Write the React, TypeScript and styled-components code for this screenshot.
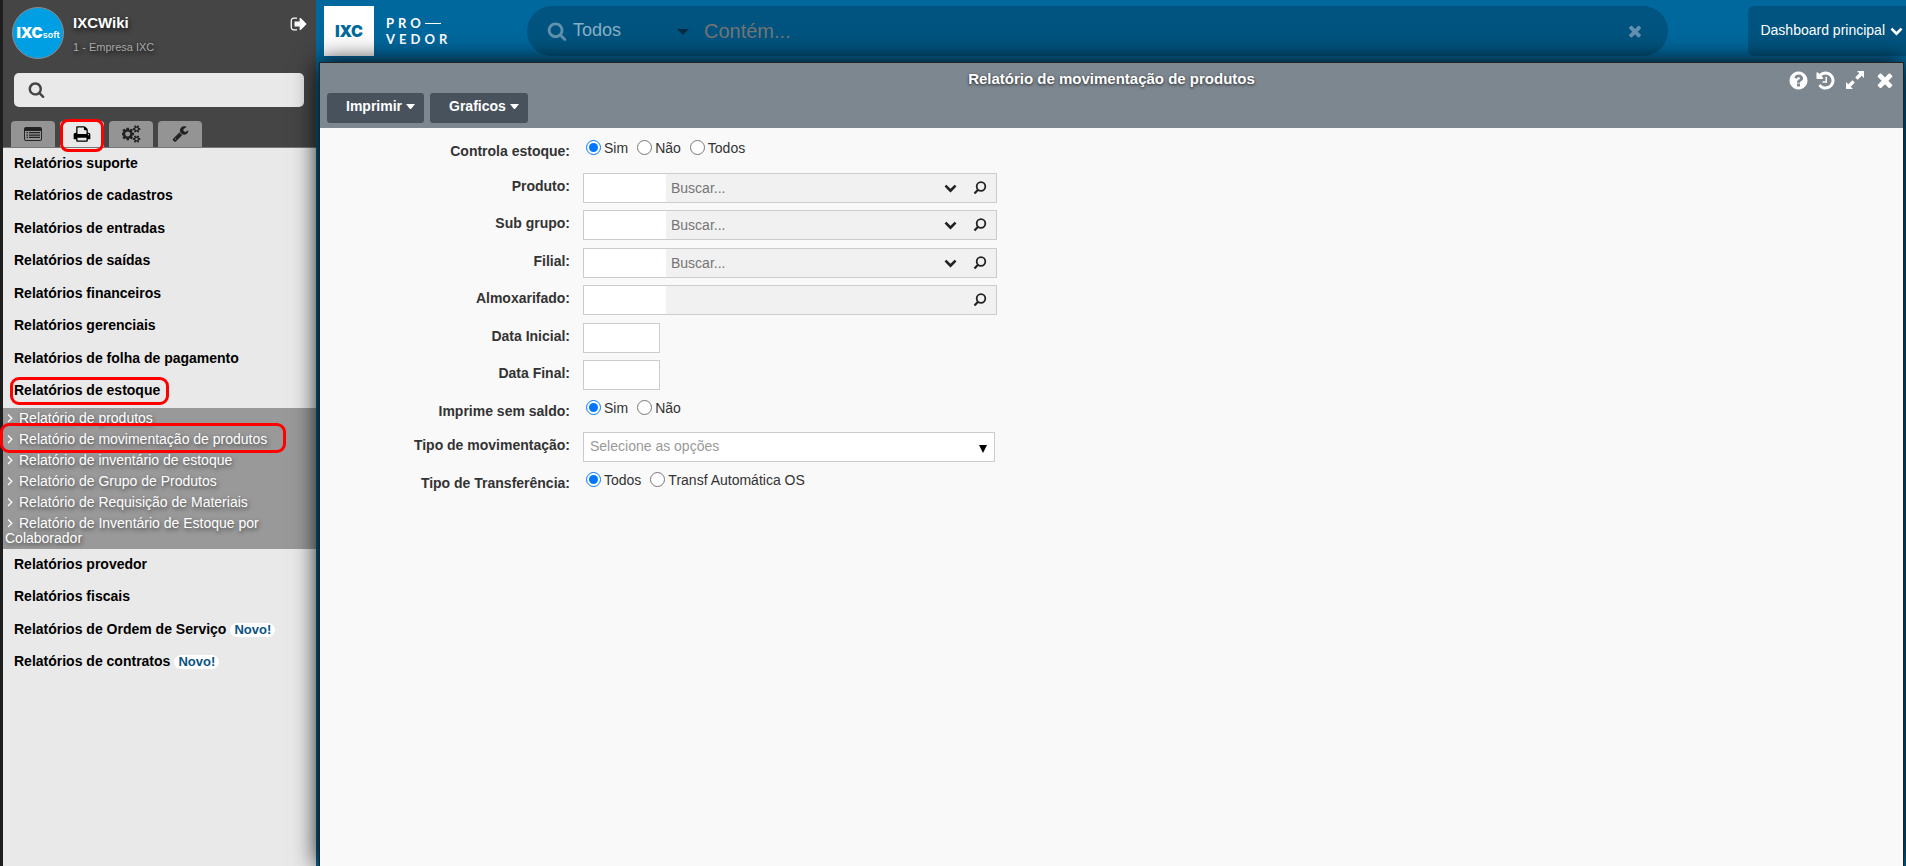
import React from "react";
import styled, { createGlobalStyle, css } from "styled-components";

const GlobalStyle = createGlobalStyle`
  *, *::before, *::after { box-sizing: border-box; }
  body {
    margin: 0;
    background: #00689d;
    color: #333;
    font-family: "Liberation Sans", Arial, Helvetica, sans-serif;
    font-size: 14px;
  }
  button, input, select { font-family: inherit; }
  ul { list-style: none; margin: 0; padding: 0; }
`;

/* ---------- icons ---------- */

type IconProps = { size: number; path: string; box?: string; wide?: number };

const Glyph = styled.svg`
  display: block;
  flex: none;
  fill: currentColor;
`;

const Icon = ({ size, path, box = "0 0 1792 1792", wide }: IconProps) => (
  <Glyph width={wide ?? size} height={size} viewBox={box} aria-hidden="true">
    <path d={path} />
  </Glyph>
);

const paths = {
  search:
    "M1216 832q0-185-131.5-316.5t-316.5-131.5-316.5 131.5-131.5 316.5 131.5 316.5 316.5 131.5 316.5-131.5 131.5-316.5zm512 832q0 52-38 90t-90 38q-54 0-90-38l-343-342q-179 124-399 124-143 0-273.5-55.5t-225-150-150-225-55.5-273.5 55.5-273.5 150-225 225-150 273.5-55.5 273.5 55.5 225 150 150 225 55.5 273.5q0 220-124 399l343 343q37 37 37 90z",
  times:
    "M1490 1322q0 40-28 68l-136 136q-28 28-68 28t-68-28l-294-294-294 294q-28 28-68 28t-68-28l-136-136q-28-28-28-68t28-68l294-294-294-294q-28-28-28-68t28-68l136-136q28-28 68-28t68 28l294 294 294-294q28-28 68-28t68 28l136 136q28 28 28 68t-28 68l-294 294 294 294q28 28 28 68z",
  wrench:
    "M448 1472q0-26-19-45t-45-19-45 19-19 45 19 45 45 19 45-19 19-45zm644-420l-682 682q-37 37-90 37-52 0-91-37l-106-108q-38-36-38-90 0-53 38-91l681-681q39 98 114.5 173.5t173.5 114.5zm634-435q0 39-23 106-47 134-164.5 217.5t-258.5 83.5q-185 0-316.5-131.5t-131.5-316.5 131.5-316.5 316.5-131.5q58 0 121.5 16.5t107.5 46.5q16 11 16 28t-16 28l-293 169v224l193 107q5-3 79-48.5t135.5-81 70.5-35.5q15 0 23.5 10t8.5 25z",
  print:
    "M448 1536h896v-256h-896v256zm0-640h896v-384h-160q-40 0-68-28t-28-68v-160h-640v640zm1152 64q0-26-19-45t-45-19-45 19-19 45 19 45 45 19 45-19 19-45zm128 0v416q0 13-9.5 22.5t-22.5 9.5h-224v160q0 40-28 68t-68 28h-960q-40 0-68-28t-28-68v-160h-224q-13 0-22.5-9.5t-9.5-22.5v-416q0-79 56.5-135.5t135.5-56.5h64v-544q0-40 28-68t68-28h672q40 0 88 20t76 48l152 152q28 28 48 76t20 88v256h64q79 0 135.5 56.5t56.5 135.5z",
  cogs:
    "M832 896q0-106-75-181t-181-75-181 75-75 181 75 181 181 75 181-75 75-181zm768 512q0-52-38-90t-90-38-90 38-38 90q0 53 37.5 90.5t90.5 37.5 90.5-37.5 37.5-90.5zm0-1024q0-52-38-90t-90-38-90 38-38 90q0 53 37.5 90.5t90.5 37.5 90.5-37.5 37.5-90.5zm-384 421v185q0 10-7 19.5t-16 10.5l-155 24q-11 35-32 76 34 48 90 115 7 11 7 20 0 12-7 19-23 30-82.5 89.5t-78.5 59.5q-11 0-21-7l-115-90q-37 19-77 31-11 108-23 155-7 24-30 24h-186q-11 0-20-7.5t-10-17.5l-23-153q-34-10-75-31l-118 89q-7 7-20 7-11 0-21-8-144-133-144-160 0-9 7-19 10-14 41-53t47-61q-23-44-35-82l-152-24q-10-1-17-9.5t-7-19.5v-185q0-10 7-19.5t16-10.5l155-24q11-35 32-76-34-48-90-115-7-11-7-20 0-12 7-20 22-30 82-89t79-59q11 0 21 7l115 90q34-18 77-32 11-108 23-154 7-24 30-24h186q11 0 20 7.5t10 17.5l23 153q34 10 75 31l118-89q8-7 20-7 11 0 21 8 144 133 144 160 0 8-7 19-12 16-42 54t-45 60q23 48 34 82l152 23q10 2 17 10.5t7 19.5zm640 533v140q0 16-149 31-12 27-30 52 51 113 51 138 0 4-4 7-122 71-124 71-8 0-46-47t-52-68q-20 2-30 2t-30-2q-14 21-52 68t-46 47q-2 0-124-71-4-3-4-7 0-25 51-138-18-25-30-52-149-15-149-31v-140q0-16 149-31 13-29 30-52-51-113-51-138 0-4 4-7 4-2 35-20t59-34 30-16q8 0 46 46.5t52 67.5q20-2 30-2t30 2q51-71 92-112l6-2q4 0 124 70 4 3 4 7 0 25-51 138 17 23 30 52 149 15 149 31zm0-1024v140q0 16-149 31-12 27-30 52 51 113 51 138 0 4-4 7-122 71-124 71-8 0-46-47t-52-68q-20 2-30 2t-30-2q-14 21-52 68t-46 47q-2 0-124-71-4-3-4-7 0-25 51-138-18-25-30-52-149-15-149-31v-140q0-16 149-31 13-29 30-52-51-113-51-138 0-4 4-7 4-2 35-20t59-34 30-16q8 0 46 46.5t52 67.5q20-2 30-2t30 2q51-71 92-112l6-2q4 0 124 70 4 3 4 7 0 25-51 138 17 23 30 52 149 15 149 31z",
  signOut:
    "M704 1440q0 4 1 20t.5 26.5-3 23.5-10 19.5-20.5 6.5h-320q-119 0-203.5-84.5t-84.5-203.5v-704q0-119 84.5-203.5t203.5-84.5h320q13 0 22.5 9.5t9.5 22.5q0 4 1 20t.5 26.5-3 23.5-10 19.5-20.5 6.5h-320q-66 0-113 47t-47 113v704q0 66 47 113t113 47h312l11.5 1 11.5 3 8 5.5 7 9 2 13.5zm928-544q0 26-19 45l-544 544q-19 19-45 19t-45-19-19-45v-288h-448q-26 0-45-19t-19-45v-384q0-26 19-45t45-19h448v-288q0-26 19-45t45-19 45 19l544 544q19 19 19 45z",
  history:
    "M1664 896q0 156-61 298t-164 245-245 164-298 61q-172 0-327-72.5t-264-204.5q-7-10-6.5-22.5t8.5-20.5l137-138q10-9 25-9 16 2 23 12 73 95 179 147t225 52q104 0 198.5-40.5t163.5-109.5 109.5-163.5 40.5-198.5-40.5-198.5-109.5-163.5-163.5-109.5-198.5-40.5q-98 0-188 35.5t-160 101.5l137 138q31 30 14 69-17 40-59 40h-448q-26 0-45-19t-19-45v-448q0-42 40-59 39-17 69 14l130 129q107-101 244.5-156.5t284.5-55.5q156 0 298 61t245 164 164 245 61 298zm-640-288v448q0 14-9 23t-23 9h-320q-14 0-23-9t-9-23v-64q0-14 9-23t23-9h224v-352q0-14 9-23t23-9h64q14 0 23 9t9 23z",
  help:
    "M1024 1376v-192q0-14-9-23t-23-9h-192q-14 0-23 9t-9 23v192q0 14 9 23t23 9h192q14 0 23-9t9-23zm256-672q0-88-55.5-163t-138.5-116-170-41q-243 0-371 213-15 24 8 42l132 100q7 6 19 6 16 0 25-12 53-68 86-92 34-24 86-24 48 0 85.5 26t37.5 59q0 38-20 61t-68 45q-63 28-115.5 86.5t-52.5 125.5v36q0 14 9 23t23 9h192q14 0 23-9t9-23q0-19 21.5-49.5t54.5-49.5q32-18 49-28.5t46-35 44.5-48 28-60.5 12.5-81zm384 192q0 209-103 385.5t-279.5 279.5-385.5 103-385.5-103-279.5-279.5-103-385.5 103-385.5 279.5-279.5 385.5-103 385.5 103 279.5 279.5 103 385.5z",
  chevronDown:
    "M1683 808l-742 741q-19 19-45 19t-45-19l-742-741q-19-19-19-45.5t19-45.5l166-165q19-19 45-19t45 19l531 531 531-531q19-19 45-19t45 19l166 165q19 19 19 45.5t-19 45.5z",
  list:
    "M2 0h14a2 2 0 0 1 2 2v10a2 2 0 0 1-2 2H2a2 2 0 0 1-2-2V2a2 2 0 0 1 2-2zM1 4v8a1 1 0 0 0 1 1h14a1 1 0 0 0 1-1V4zM2.500 5h1.500v1.300H2.500zM5 5h11v1.300H5zM2.500 7.400h1.500v1.300H2.500zM5 7.400h11v1.300H5zM2.500 9.800h1.500v1.300H2.500zM5 9.800h11v1.300H5z",
  expand:
    "M11 0h7v7l-2.300-2.300-4.100 4.100-2.400-2.400 4.100-4.100zM7 18H0v-7l2.300 2.300 4.100-4.100 2.400 2.400-4.100 4.100z",
  caret: "M0 0h12L6 6z",
  smallCaret: "M0 0h9L5 5H4z",
};

const LookupIcon = () => (
  <svg width="14" height="14" viewBox="0 0 14 14" fill="none" stroke="#222" aria-hidden="true">
    <circle cx="8" cy="5.500" r="4.300" strokeWidth="1.800" />
    <path d="M5 8.800 1.500 12.500" strokeWidth="2.200" />
  </svg>
);

const MenuArrow = styled.svg`
  display: inline-block;
  width: 6px;
  height: 10px;
  margin: 0 6px 0 2px;
  fill: none;
  stroke: #fff;
`;

/* ---------- page frame ---------- */

const Page = styled.div`
  display: grid;
  grid-template-columns: 316px minmax(0, 1fr);
  min-height: 100vh;
  overflow: hidden;
`;

const highlight = css`
  content: "";
  position: absolute;
  border: 3px solid #f00;
  pointer-events: none;
`;

/* ---------- sidebar ---------- */

const Sidebar = styled.aside`
  background: #e9e9e9;
  border-left: 3px solid #1e1e1e;
`;

const SideHeader = styled.header`
  display: flex;
  flex-direction: column;
  background: #454545;
  border-bottom: 1px solid #777;
`;

const Profile = styled.div`
  display: flex;
  align-items: flex-start;
  padding: 7px 8px 0 9px;
`;

const Avatar = styled.div`
  display: flex;
  align-items: baseline;
  justify-content: center;
  width: 52px;
  height: 52px;
  border: 1px solid #8b8b8b;
  border-radius: 50%;
  background: #009fe3;
  color: #fff;
  font: 900 15px/50px Inter, "Liberation Sans", sans-serif;

  small { font-size: 9px; font-weight: 600; }
`;

const ProfileText = styled.div`
  flex: 1;
  padding-left: 9px;
  text-shadow: 1px 2px 4px #111;
`;

const UserName = styled.div`
  color: #fff;
  font-size: 15px;
  font-weight: 700;
  line-height: 32px;
`;

const Company = styled.div`
  color: #a8a8a8;
  font-size: 11px;
  line-height: 16px;
`;

const IconButton = styled.button<{ $color?: string }>`
  display: flex;
  align-items: center;
  justify-content: center;
  padding: 0;
  border: 0;
  background: none;
  color: ${(p) => p.$color ?? "#fff"};
  cursor: pointer;
`;

const LogoutButton = styled(IconButton)`
  height: 34px;
`;

const MenuSearch = styled.label`
  display: flex;
  align-items: center;
  height: 34px;
  margin: 14px 12px 0 11px;
  padding: 0 15px 2px 14px;
  gap: 8px;
  border-radius: 5px;
  background: #e9e9e9;
  color: #444;

  input {
    flex: 1;
    min-width: 0;
    border: 0;
    outline: 0;
    background: none;
    font-size: 14px;
  }
`;

const Tabs = styled.div`
  display: flex;
  gap: 5px;
  padding: 14px 8px 0;
`;

const Tab = styled.button<{ $active?: boolean }>`
  position: relative;
  display: flex;
  align-items: center;
  justify-content: center;
  width: 44px;
  height: 26px;
  padding: 0 0 1px;
  border: 0;
  border-radius: 4px 4px 0 0;
  background: ${(p) => (p.$active ? "#e9e9e9" : "#949494")};
  color: ${(p) => (p.$active ? "#000" : "#222")};

  ${(p) =>
    p.$active &&
    css`
      &::after {
        ${highlight}
        inset: -2px 0 -5px 0;
        border-radius: 8px;
      }
    `}
`;

const Group = styled.li`
  &:nth-child(even) > :first-child {
    height: 33px;
    padding-bottom: 4px;
  }
`;

const GroupLink = styled.a<{ $marked?: boolean }>`
  position: relative;
  display: flex;
  align-items: center;
  height: 32px;
  padding: 0 11px 2px;
  color: #000;
  font-weight: 700;
  text-decoration: none;

  span { position: relative; }

  ${(p) =>
    p.$marked &&
    css`
      span::after {
        ${highlight}
        inset: -5px -9px -7px -4px;
        border-radius: 9px;
      }
    `}
`;

const Badge = styled.em`
  margin: 2px 0 0 4px;
  padding: 0 4px;
  border-radius: 7px;
  background: #fff;
  color: #0a5483;
  font-size: 13px;
  font-style: normal;
  line-height: 14px;
`;

const SubMenu = styled.ul`
  background: #999;
`;

const SubItem = styled.li<{ $marked?: boolean }>`
  position: relative;
  padding: 3px 3px 3px 2px;
  line-height: 15px;

  a {
    color: #fff;
    text-decoration: none;
    text-shadow: 1px 2px 4px #444;
  }

  ${(p) =>
    p.$marked &&
    css`
      z-index: 1;
      &::after {
        ${highlight}
        inset: -6px 30px -3px -3px;
        border-radius: 9px;
      }
    `}
`;

/* ---------- top bar ---------- */

const Main = styled.div`
  display: flex;
  flex-direction: column;
  min-width: 0;
`;

const TopBar = styled.header`
  display: flex;
  align-items: center;
  height: 62px;
  padding: 0 0 0 8px;
`;

const Brand = styled.div`
  display: flex;
  align-items: center;
  width: 203px;
  gap: 12px;
`;

const BrandMark = styled.div`
  width: 50px;
  height: 50px;
  background: #fff;
  color: #00689d;
  font: 900 16px/50px Inter, "Liberation Sans", sans-serif;
  text-align: center;
`;

const BrandName = styled.div`
  color: #fff;
  font: 700 13px/16px Lato, "Liberation Sans", sans-serif;
  letter-spacing: 4px;

  span { display: flex; align-items: center; }
  i { width: 16px; height: 1px; background: #fff; }
`;

const GlobalSearch = styled.div`
  display: flex;
  align-items: center;
  flex: 1;
  height: 50px;
  padding: 0 24px 0 20px;
  border-radius: 25px;
  background: #00547f;
  color: #6291af;
`;

const ScopeSelect = styled.div`
  position: relative;
  width: 137px;
  color: #012c43;

  select {
    display: block;
    width: 100%;
    padding: 0 0 2px 6px;
    border: 0;
    outline: 0;
    appearance: none;
    background: none;
    color: #8ab0c6;
    font-size: 18px;
    line-height: 22px;
  }
  svg { position: absolute; right: 15px; top: 10px; pointer-events: none; }
`;

const SearchInput = styled.input`
  flex: 1;
  min-width: 0;
  padding: 0;
  border: 0;
  outline: 0;
  background: none;
  color: #fff;
  font-size: 20px;

  &::placeholder { color: #757575; }
`;

const DashboardButton = styled.button`
  display: flex;
  align-items: center;
  height: 50px;
  margin-left: 80px;
  padding: 0 3px 2px 12px;
  gap: 5px;
  border: 0;
  border-radius: 6px 0 0 6px;
  background: #00547f;
  color: #fff;
  font-size: 14px;
`;

/* ---------- window ---------- */

const Window = styled.section`
  position: relative;
  z-index: 1;
  flex: 1;
  margin: 0 2px 0 3px;
  border: 1px solid #222;
  border-bottom: 0;
  background: #f9f9f9;
  box-shadow: 0 0 24px #000;
`;

const WindowHeader = styled.header`
  padding-bottom: 5px;
  background: #7d8790;
`;

const TitleRow = styled.div`
  display: grid;
  grid-template-columns: 1fr auto 1fr;
  height: 30px;
`;

const Title = styled.h1`
  grid-column: 2;
  margin: 0;
  color: #fff;
  font-size: 15px;
  line-height: 32px;
  text-shadow: 0 1px 3px #222;
`;

const WindowTools = styled.div`
  display: flex;
  justify-content: flex-end;
  padding: 2px 7px 0 0;
  gap: 5px;

  button { width: 22px; }
  button:nth-child(3) { width: 28px; }
`;

const Toolbar = styled.div`
  display: flex;
  gap: 6px;
  padding: 0 7px;
`;

const ToolButton = styled.button`
  display: flex;
  align-items: center;
  height: 30px;
  padding: 0 9px 4px 19px;
  gap: 4px;
  border: 0;
  border-radius: 3px;
  background: #48525d;
  color: #fff;
  font-size: 14px;
  font-weight: 700;
`;

const Form = styled.form`
  padding: 10px 0;
`;

const Row = styled.div<{ $radio?: boolean }>`
  display: grid;
  grid-template-columns: 250px minmax(0, 414px);
  align-items: start;
  gap: 13px;
  height: ${(p) => (p.$radio ? 27 : 30)}px;
  margin-bottom: 8px;

  &:nth-child(even) { margin-bottom: 7px; }
`;

const labelStyle = css`
  font-weight: 700;
  line-height: 26px;
  text-align: right;
`;

const Label = styled.label`
  ${labelStyle}
`;

const GroupLabel = styled.span`
  ${labelStyle}
`;

const RadioGroup = styled.div`
  display: flex;
  gap: 9px;
  height: 19px;
  padding-left: 3px;
`;

const Radio = styled.label`
  display: flex;
  align-items: center;
  gap: 3px;

  input {
    width: 15px;
    height: 15px;
    margin: 0;
    accent-color: #0075ff;
  }
`;

const LookupBox = styled.div`
  display: flex;
  height: 30px;
  padding-right: 1px;
  border: 1px solid #ccc;
  background: #f1f1f1;

  button { width: 30px; height: 27px; }
`;

const CodeInput = styled.input`
  width: 82px;
  padding: 0 4px;
  border: 0;
  outline: 0;
  background: #fff;
  font-size: 14px;
`;

const LookupInput = styled.input`
  flex: 1;
  min-width: 0;
  padding: 0 5px 1px;
  border: 0;
  outline: 0;
  background: none;
  font-size: 14px;

  &::placeholder { color: #757575; }
`;

const DateInput = styled.input`
  width: 77px;
  height: 30px;
  padding: 0 4px;
  border: 1px solid #ccc;
  background: #fff;
  font-size: 14px;
`;

const TypeSelect = styled.div`
  position: relative;
  margin-right: 2px;
  color: #000;

  select {
    display: block;
    width: 100%;
    height: 30px;
    padding: 0 6px 2px;
    border: 1px solid #ccc;
    border-radius: 0;
    outline: 0;
    appearance: none;
    background: #fff;
    color: #999;
    font-size: 14px;
  }
  svg { position: absolute; right: 8px; top: 13px; pointer-events: none; }
`;

/* ---------- content ---------- */

type MenuGroup = { name: string; isNew?: boolean; marked?: boolean; items?: { name: string; marked?: boolean }[] };

const menu: MenuGroup[] = [
  { name: "Relatórios suporte" },
  { name: "Relatórios de cadastros" },
  { name: "Relatórios de entradas" },
  { name: "Relatórios de saídas" },
  { name: "Relatórios financeiros" },
  { name: "Relatórios gerenciais" },
  { name: "Relatórios de folha de pagamento" },
  {
    name: "Relatórios de estoque",
    marked: true,
    items: [
      { name: "Relatório de produtos" },
      { name: "Relatório de movimentação de produtos", marked: true },
      { name: "Relatório de inventário de estoque" },
      { name: "Relatório de Grupo de Produtos" },
      { name: "Relatório de Requisição de Materiais" },
      { name: "Relatório de Inventário de Estoque por Colaborador" },
    ],
  },
  { name: "Relatórios provedor" },
  { name: "Relatórios fiscais" },
  { name: "Relatórios de Ordem de Serviço", isNew: true },
  { name: "Relatórios de contratos", isNew: true },
];

const RadioRow = ({ name, label, options }: { name: string; label: string; options: string[] }) => (
  <Row $radio role="radiogroup" aria-labelledby={`${name}-label`}>
    <GroupLabel id={`${name}-label`}>{label}</GroupLabel>
    <RadioGroup>
      {options.map((option, i) => (
        <Radio key={option}>
          <input type="radio" name={name} defaultChecked={i === 0} />
          {option}
        </Radio>
      ))}
    </RadioGroup>
  </Row>
);

const LookupRow = ({ id, label, searchable }: { id: string; label: string; searchable?: boolean }) => (
  <Row>
    <Label htmlFor={id}>{label}</Label>
    <LookupBox>
      <CodeInput id={id} type="text" />
      <LookupInput type="text" aria-label={label} placeholder={searchable ? "Buscar..." : undefined} />
      {searchable && (
        <IconButton type="button" $color="#222" aria-label="Abrir lista">
          <Icon size={13} path={paths.chevronDown} />
        </IconButton>
      )}
      <IconButton type="button" $color="#222" aria-label="Pesquisar">
        <LookupIcon />
      </IconButton>
    </LookupBox>
  </Row>
);

const DateRow = ({ id, label }: { id: string; label: string }) => (
  <Row>
    <Label htmlFor={id}>{label}</Label>
    <DateInput id={id} type="text" />
  </Row>
);

export default function App() {
  return (
    <>
      <GlobalStyle />
      <Page>
        <Sidebar>
          <SideHeader>
            <Profile>
              <Avatar>
                IXC<small>soft</small>
              </Avatar>
              <ProfileText>
                <UserName>IXCWiki</UserName>
                <Company>1 - Empresa IXC</Company>
              </ProfileText>
              <LogoutButton type="button" aria-label="Sair">
                <Icon size={18} path={paths.signOut} />
              </LogoutButton>
            </Profile>
            <MenuSearch>
              <Icon size={17} path={paths.search} />
              <input type="search" aria-label="Pesquisar no menu" />
            </MenuSearch>
            <Tabs>
              <Tab type="button" aria-label="Cadastros">
                <Icon size={14} wide={18} box="0 0 18 14" path={paths.list} />
              </Tab>
              <Tab type="button" aria-label="Relatórios" $active>
                <Icon size={18} path={paths.print} />
              </Tab>
              <Tab type="button" aria-label="Configurações">
                <Icon size={18} wide={19} box="0 0 1920 1792" path={paths.cogs} />
              </Tab>
              <Tab type="button" aria-label="Ferramentas">
                <Icon size={17} path={paths.wrench} />
              </Tab>
            </Tabs>
          </SideHeader>
          <nav>
            <ul>
              {menu.map((group) => (
                <Group key={group.name}>
                  <GroupLink href="#" $marked={group.marked}>
                    <span>{group.name}</span>
                    {group.isNew && <Badge>Novo!</Badge>}
                  </GroupLink>
                  {group.items && (
                    <SubMenu>
                      {group.items.map((item) => (
                        <SubItem key={item.name} $marked={item.marked}>
                          <a href="#">
                            <MenuArrow viewBox="0 0 6 10" aria-hidden="true">
                              <path d="M1 1.500 4.800 5.300 1 9" strokeWidth="1.300" />
                            </MenuArrow>
                            {item.name}
                          </a>
                        </SubItem>
                      ))}
                    </SubMenu>
                  )}
                </Group>
              ))}
            </ul>
          </nav>
        </Sidebar>

        <Main>
          <TopBar>
            <Brand>
              <BrandMark>IXC</BrandMark>
              <BrandName>
                <span>
                  PRO
                  <i />
                </span>
                <span>VEDOR</span>
              </BrandName>
            </Brand>
            <GlobalSearch>
              <Icon size={20} path={paths.search} />
              <ScopeSelect>
                <select aria-label="Filtro">
                  <option>Todos</option>
                </select>
                <Icon size={6} wide={12} box="0 0 12 6" path={paths.caret} />
              </ScopeSelect>
              <SearchInput type="text" aria-label="Busca" placeholder="Contém..." />
              <IconButton type="button" $color="#6291af" aria-label="Limpar">
                <Icon size={18} path={paths.times} />
              </IconButton>
            </GlobalSearch>
            <DashboardButton type="button">
              Dashboard principal
              <Icon size={13} path={paths.chevronDown} />
            </DashboardButton>
          </TopBar>

          <Window>
            <WindowHeader>
              <TitleRow>
                <Title>Relatório de movimentação de produtos</Title>
                <WindowTools>
                  <IconButton type="button" aria-label="Ajuda">
                    <Icon size={21} path={paths.help} />
                  </IconButton>
                  <IconButton type="button" aria-label="Histórico">
                    <Icon size={21} path={paths.history} />
                  </IconButton>
                  <IconButton type="button" aria-label="Expandir">
                    <Icon size={18} box="0 0 18 18" path={paths.expand} />
                  </IconButton>
                  <IconButton type="button" aria-label="Fechar">
                    <Icon size={22} path={paths.times} />
                  </IconButton>
                </WindowTools>
              </TitleRow>
              <Toolbar>
                <ToolButton type="button">
                  Imprimir
                  <Icon size={5} wide={9} box="0 0 9 5" path={paths.smallCaret} />
                </ToolButton>
                <ToolButton type="button">
                  Graficos
                  <Icon size={5} wide={9} box="0 0 9 5" path={paths.smallCaret} />
                </ToolButton>
              </Toolbar>
            </WindowHeader>

            <Form>
              <RadioRow name="controla" label="Controla estoque:" options={["Sim", "Não", "Todos"]} />
              <LookupRow id="produto" label="Produto:" searchable />
              <LookupRow id="subgrupo" label="Sub grupo:" searchable />
              <LookupRow id="filial" label="Filial:" searchable />
              <LookupRow id="almoxarifado" label="Almoxarifado:" />
              <DateRow id="inicial" label="Data Inicial:" />
              <DateRow id="final" label="Data Final:" />
              <RadioRow name="saldo" label="Imprime sem saldo:" options={["Sim", "Não"]} />
              <Row>
                <Label htmlFor="tipo">Tipo de movimentação:</Label>
                <TypeSelect>
                  <select id="tipo">
                    <option>Selecione as opções</option>
                  </select>
                  <Icon size={8} box="0 0 8 8" path="M0 0h8L4 8z" />
                </TypeSelect>
              </Row>
              <RadioRow name="transferencia" label="Tipo de Transferência:" options={["Todos", "Transf Automática OS"]} />
            </Form>
          </Window>
        </Main>
      </Page>
    </>
  );
}
